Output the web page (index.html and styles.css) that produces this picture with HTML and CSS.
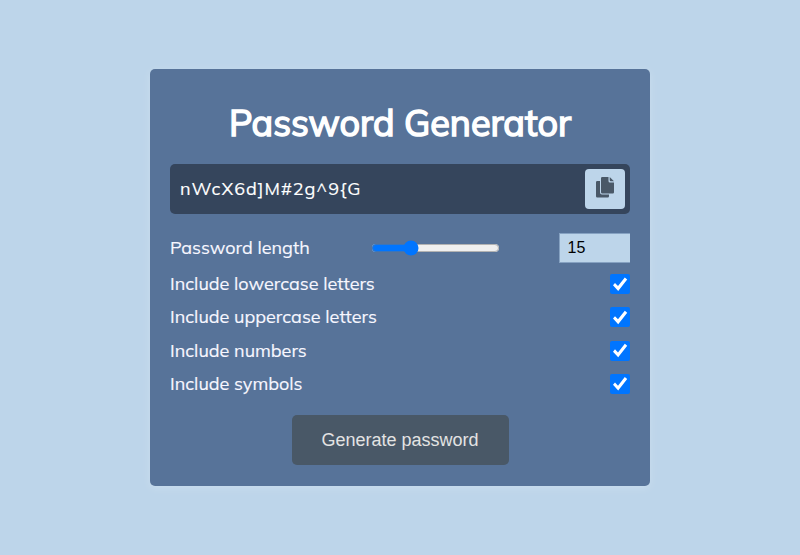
FILE: index.html
```html
<!DOCTYPE html>
<html lang="en">
<head>
<meta charset="utf-8">
<title>Password Generator</title>
<link rel="stylesheet" href="styles.css">
</head>
<body>
<main class="card">
  <h1 class="title">Password Generator</h1>
  <div class="result">
    <span class="password">nWcX6d]M#2g^9{G</span>
    <button class="copy" type="button" aria-label="Copy">
      <svg width="18" height="21" viewBox="0 0 18 21"><path fill="#495867" d="M0 5.2Q0 4 1.200 4H4V15.500Q4 17.600 6 17.600H13V19.300Q13 20.500 11.800 20.500H1.200Q0 20.500 0 19.300ZM6.200 0H12.500V4Q12.500 5.500 14 5.500H18V15.300Q18 16.500 16.800 16.500H6.200Q5 16.500 5 15.300V1.200Q5 0 6.200 0ZM13.700 0L18 4.300H14.700Q13.700 4.300 13.700 3.300Z"/></svg>
    </button>
  </div>
  <div class="row length">
    <label for="range">Password length</label>
    <input class="range" id="range" type="range" min="1" max="50" value="15">
    <input class="number" type="text" value="15" aria-label="Length">
  </div>
  <div class="row"><label for="lower">Include lowercase letters</label><input class="check" id="lower" type="checkbox" checked></div>
  <div class="row"><label for="upper">Include uppercase letters</label><input class="check" id="upper" type="checkbox" checked></div>
  <div class="row"><label for="numbers">Include numbers</label><input class="check" id="numbers" type="checkbox" checked></div>
  <div class="row"><label for="symbols">Include symbols</label><input class="check" id="symbols" type="checkbox" checked></div>
  <button class="generate" type="button">Generate password</button>
</main>
</body>
</html>
```
FILE: styles.css
```css
* { box-sizing: border-box; }
body {
  margin: 0;
  height: 555px;
  display: flex;
  align-items: center;
  justify-content: center;
  overflow: hidden;
  background: #bdd5ea;
  color: #f7f7ff;
  font: 18px/24px Muli, Mulish, Lato, sans-serif;
  -webkit-text-stroke: .15px;
}
.card {
  width: 500px;
  height: 417px;
  padding: 29px 20px 20px;
  display: flex;
  flex-direction: column;
  background: #577399;
  border-radius: 5px;
  box-shadow: 0 2px 10px rgba(255, 255, 255, .2);
}
.title {
  margin: 0 0 16px;
  font-size: 36px;
  font-weight: 400;
  line-height: 50px;
  text-align: center;
  white-space: nowrap;
  color: #fff;
  -webkit-text-stroke: 1.5px;
}
.result {
  height: 49.5px;
  padding: 0 5px 0 10px;
  display: flex;
  align-items: center;
  justify-content: space-between;
  background: #35455c;
  border-radius: 5px;
}
.password { letter-spacing: 1px; color: #fff; }
.copy {
  width: 40px;
  height: 40px;
  padding: 0 0 3px;
  display: flex;
  align-items: center;
  justify-content: center;
  background: #bdd5ea;
  border: 0;
  border-radius: 4px;
}
.row {
  height: 33.2px;
  display: flex;
  align-items: center;
  justify-content: space-between;
  white-space: nowrap;
}
.length { height: 30px; margin: 19.5px 0 4.7px; }
.length label { width: 140px; }
.range { width: 129px; height: 16px; margin: 0 0 0 1px; accent-color: #0075ff; }
.number {
  width: 71px;
  height: 30px;
  padding: 0 7.5px;
  border: 1px solid #86a2c2;
  border-right: 0;
  border-radius: 0;
  background: #bdd5ea;
  color: #000;
  font: 16px "Liberation Sans", Arial, sans-serif;
  -webkit-text-stroke: 0;
}
.check {
  appearance: none;
  width: 20px;
  height: 20px;
  margin: 0;
  border-radius: 2px;
}
.check:checked { background: #0075ff; }
.check:checked::before {
  content: "";
  display: block;
  width: 20px;
  height: 20px;
  background: #fff;
  clip-path: polygon(3px 11px, 5px 8.700px, 8px 11.800px, 14.800px 3.200px, 17.200px 5.200px, 8.200px 16.700px);
}
.generate {
  width: 217px;
  height: 50px;
  margin: 14.8px auto 0;
  padding: 0;
  border: 0;
  border-radius: 5px;
  background: #495867;
  color: #e3e3e3;
  font: 18px "Liberation Sans", Arial, sans-serif;
  -webkit-text-stroke: 0;
}
```
